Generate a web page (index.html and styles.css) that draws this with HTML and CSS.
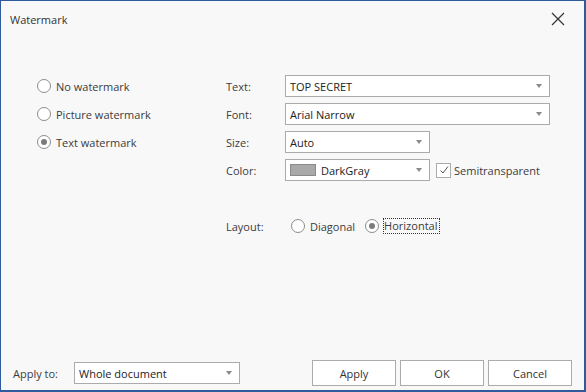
FILE: index.html
```html
<!DOCTYPE html>
<html>
<head>
<meta charset="utf-8">
<link rel="stylesheet" href="styles.css">
</head>
<body>
<div class="window">
  <div class="titlebar">
    <span class="title">Watermark</span>
    <span class="close">
      <svg width="14" height="14" viewBox="0 0 14 14"><path d="M1 1 L13 13 M13 1 L1 13" stroke="#333" stroke-width="1.2" fill="none"/></svg>
    </span>
  </div>
  <div class="content">
    <div class="kinds">
      <label class="radio"><span class="circle"></span><span>No watermark</span></label>
      <label class="radio"><span class="circle"></span><span>Picture watermark</span></label>
      <label class="radio"><span class="circle on"></span><span>Text watermark</span></label>
    </div>
    <div class="form">
      <div class="grid">
        <span class="lbl">Text:</span>
        <div class="combo wide"><span class="val">TOP SECRET</span><span class="arrow"></span></div>
        <span class="lbl">Font:</span>
        <div class="combo wide"><span class="val">Arial Narrow</span><span class="arrow"></span></div>
        <span class="lbl">Size:</span>
        <div class="combo narrow"><span class="val">Auto</span><span class="arrow"></span></div>
        <span class="lbl">Color:</span>
        <div class="colorrow">
          <div class="combo narrow"><span class="swatch"></span><span class="val">DarkGray</span><span class="arrow"></span></div>
          <label class="check"><span class="box"><svg width="12" height="12" viewBox="0 0 12 12"><path d="M2.5 6.5 L5 9 L10 2.5" stroke="#555" stroke-width="1" fill="none"/></svg></span><span>Semitransparent</span></label>
        </div>
      </div>
      <div class="layout">
        <span class="lbl">Layout:</span>
        <label class="radio"><span class="circle"></span><span>Diagonal</span></label>
        <label class="radio"><span class="circle on"></span><span class="focus">Horizontal</span></label>
      </div>
    </div>
  </div>
  <div class="footer">
    <div class="apply-to">
      <span class="lbl">Apply to:</span>
      <div class="combo scope"><span class="val">Whole document</span><span class="arrow"></span></div>
    </div>
    <div class="buttons">
      <button class="btn">Apply</button>
      <button class="btn">OK</button>
      <button class="btn">Cancel</button>
    </div>
  </div>
</div>
</body>
</html>
```
FILE: styles.css
```css
* { box-sizing: border-box; }
html, body { margin: 0; padding: 0; }
body {
  font-family: "Open Sans", "Noto Sans", sans-serif;
  font-size: 11px;
  color: #3c3c3c;
  background: #f8f8f8;
}
.window {
  width: 586px;
  height: 392px;
  border: 1px solid #2f5a9c;
  border-right-width: 2px;
  border-bottom-width: 2px;
  background: #f8f8f8;
  display: flex;
  flex-direction: column;
}
.titlebar {
  height: 36px;
  flex: none;
  display: flex;
  align-items: center;
  justify-content: space-between;
  padding: 0 19px 0 9px;
}
.title { color: #333; }
.close { display: flex; }
.content {
  display: flex;
  padding: 38px 0 0 36px;
  flex: 1;
}
.kinds {
  width: 189px;
  display: flex;
  flex-direction: column;
  gap: 6px;
}
.radio {
  display: flex;
  align-items: center;
  height: 22px;
  gap: 5px;
}
.circle {
  width: 14px;
  height: 14px;
  border: 1px solid #8c8c8c;
  border-radius: 50%;
  background: #fff;
  display: flex;
  align-items: center;
  justify-content: center;
  flex: none;
}
.circle.on::after {
  content: "";
  width: 6px;
  height: 6px;
  border-radius: 50%;
  background: #7a7a7a;
}
.form { display: flex; flex-direction: column; }
.grid {
  display: grid;
  grid-template-columns: 59px auto;
  grid-auto-rows: 22px;
  row-gap: 6px;
  align-items: center;
}
.lbl { color: #3c3c3c; }
.combo {
  height: 22px;
  border: 1px solid #ababab;
  background: #fff;
  display: flex;
  align-items: center;
  padding: 0 7px 0 4px;
  gap: 5px;
}
.combo .val { flex: 1; color: #222; }
.combo.wide { width: 265px; }
.combo.narrow { width: 145px; }
.combo.scope { width: 166px; }
.arrow {
  width: 0;
  height: 0;
  border-left: 3.5px solid transparent;
  border-right: 3.5px solid transparent;
  border-top: 4px solid #8a8a8a;
  flex: none;
}
.swatch {
  width: 26px;
  height: 12px;
  background: #a9a9a9;
  border: 1px solid #8a8a8a;
  flex: none;
}
.colorrow { display: flex; align-items: center; gap: 6px; }
.check { display: flex; align-items: center; gap: 3px; }
.box {
  width: 15px;
  height: 15px;
  border: 1px solid #ababab;
  background: #fff;
  display: flex;
  align-items: center;
  justify-content: center;
}
.layout {
  display: flex;
  align-items: center;
  margin-top: 34px;
  height: 22px;
}
.layout .lbl { width: 65px; }
.layout .radio + .radio { margin-left: 10px; }
.focus {
  outline: 1px dotted #333;
  outline-offset: 0;
  line-height: 14px;
  padding: 0 2px 0 0;
}
.footer {
  height: 32px;
  flex: none;
  display: flex;
  align-items: flex-end;
  justify-content: space-between;
  padding: 0 12px 4px 12px;
}
.apply-to { display: flex; align-items: center; margin-bottom: 2px; }
.apply-to .lbl { width: 61px; }
.buttons { display: flex; gap: 4px; }
.btn {
  width: 84px;
  height: 26px;
  border: 1px solid #ababab;
  background: #fff;
  font-family: inherit;
  font-size: 11px;
  color: #333;
  padding: 0;
}
```
